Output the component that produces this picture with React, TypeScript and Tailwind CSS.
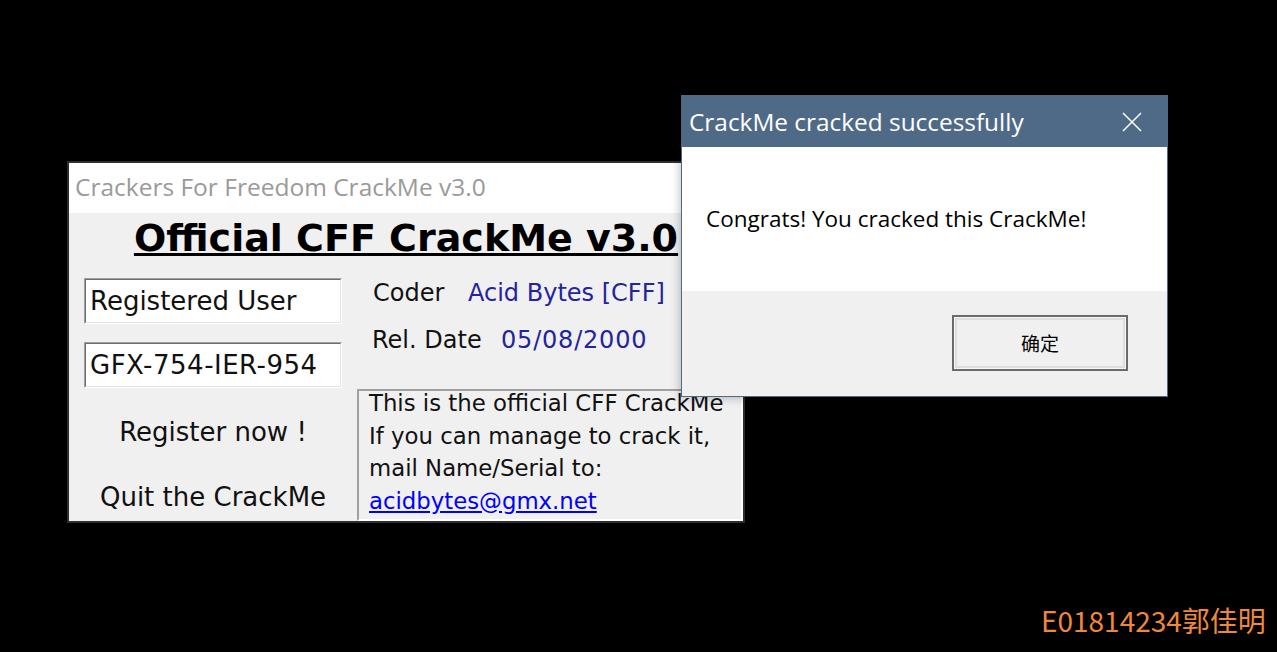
import type { ReactNode } from "react";

const Field = ({ children, className = "" }: { children: ReactNode; className?: string }) => (
  <div className={`w-[258px] border border-t-[#a0a0a0] border-l-[#a0a0a0] border-b-white border-r-white ${className}`}>
    <div className="h-[44px] border border-t-[#6d6d6d] border-l-[#6d6d6d] border-b-[#e3e3e3] border-r-[#e3e3e3] bg-white pl-[4px] text-[26px] leading-[42px] text-[#111]">
      {children}
    </div>
  </div>
);

const MainWindow = () => (
  <div className="absolute left-[67px] top-[161px] flex h-[362px] w-[678px] flex-col border-2 border-[#2e2e2e] bg-[#f0f0f0] font-['DejaVu_Sans',sans-serif] text-[#111]">
    {/* Title bar */}
    <div className="flex h-[50px] items-center bg-white pb-[3px] pl-[6px] font-['Open_Sans',sans-serif] text-[24.5px] leading-[30px] text-[#9a9a9a]">
      Crackers For Freedom CrackMe v3.0
    </div>

    {/* Heading */}
    <div className="h-[65px] pt-[5px] text-center">
      <span className="text-[38px] font-bold leading-[40px] text-black underline decoration-[3px] underline-offset-[2px]">
        Official CFF CrackMe v3.0
      </span>
    </div>

    <div className="flex flex-1">
      {/* Left column */}
      <div className="flex w-[288px] flex-col items-center">
        <Field>Registered User</Field>
        <Field className="mt-[18px]">
          <span className="tracking-[0.5px]">GFX-754-IER-954</span>
        </Field>
        <div className="mt-[28px] text-[26px] leading-[32px]">Register now !</div>
        <div className="mt-[33px] text-[26px] leading-[32px]">Quit the CrackMe</div>
      </div>

      {/* Right column */}
      <div className="flex flex-1 flex-col">
        <div className="flex pl-[16px] text-[24px] leading-[30px]">
          <span className="w-[95px]">Coder</span>
          <span className="text-[#24249c]">Acid Bytes [CFF]</span>
        </div>
        <div className="mt-[17px] flex pl-[15px] text-[24px] leading-[30px]">
          <span className="w-[129px]">Rel. Date</span>
          <span className="tracking-[0.8px] text-[#24249c]">05/08/2000</span>
        </div>
        <div className="mt-[34px] flex-1 border-2 border-t-[#a0a0a0] border-l-[#a0a0a0] border-b-white border-r-white pl-[10px]">
          <div className="-mt-[4px] text-[22.8px] leading-[32.5px]">
            <div>This is the official CFF CrackMe</div>
            <div>If you can manage to crack it,</div>
            <div>mail Name/Serial to:</div>
            <div className="text-[#0000ff] underline">acidbytes@gmx.net</div>
          </div>
        </div>
      </div>
    </div>
  </div>
);

const MessageBox = () => (
  <div className="absolute left-[681px] top-[95px] flex h-[302px] w-[487px] flex-col border border-[#4f6a87] font-['Open_Sans',sans-serif] shadow-[0_0_10px_rgba(0,0,0,0.3)]">
    <div className="flex h-[51px] items-center justify-between bg-[#4f6a87] pl-[7px] pr-[25px]">
      <span className="text-[24.4px] leading-[30px] text-white">CrackMe cracked successfully</span>
      <svg width="20" height="20" viewBox="0 0 20 20" fill="none" stroke="white" strokeWidth="1.5">
        <path d="M1 1L19 19M19 1L1 19" />
      </svg>
    </div>
    <div className="h-[144px] bg-white pl-[24px] pt-[58px] text-[22.5px] leading-[28px] text-black">
      Congrats! You cracked this CrackMe!
    </div>
    <div className="flex flex-1 justify-end bg-[#f0f0f0] pr-[39px] pt-[24px]">
      <button className="h-[56px] w-[176px] border-2 border-[#6b6b6b] bg-[#f7f7f7] p-px">
        <div className="flex h-full items-center justify-center border-2 border-[#dedede] bg-[#f0f0f0] font-['Noto_Sans_CJK_SC',sans-serif] text-[19px] text-black">
          确定
        </div>
      </button>
    </div>
  </div>
);

export default function App() {
  return (
    <div className="relative h-[652px] w-full overflow-hidden bg-black">
      <MainWindow />
      <MessageBox />
      <div className="absolute left-[1041px] top-[606px] font-['Noto_Sans_CJK_SC',sans-serif] text-[28px] leading-none text-[#f0883a]">
        E01814234郭佳明
      </div>
    </div>
  );
}
